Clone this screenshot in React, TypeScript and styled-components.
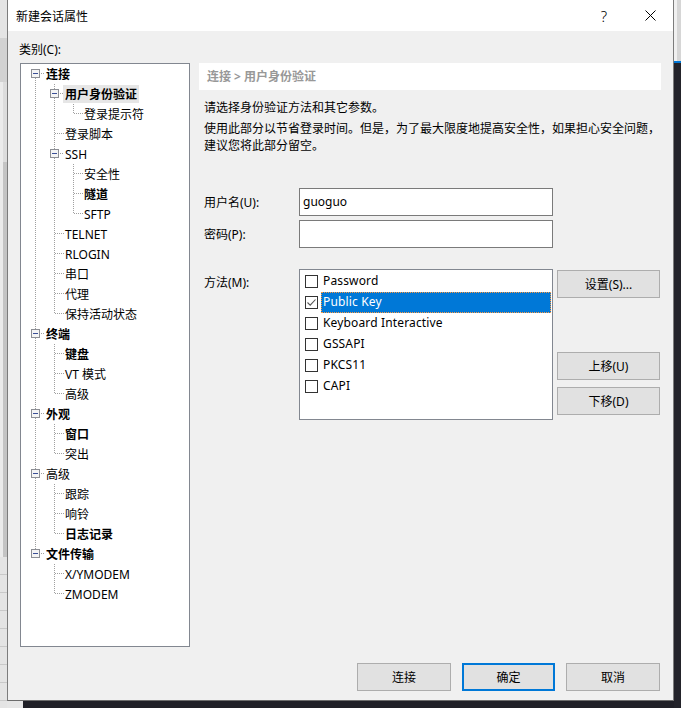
import { createGlobalStyle, styled } from "styled-components"

const GlobalStyle = createGlobalStyle`
  html, body {
    margin: 0;
    padding: 0;
    background: #202027;
  }
  body {
    font-family: "Noto Sans", "Noto Sans CJK SC", sans-serif;
    font-size: 12px;
    color: #000;
  }
  * { box-sizing: border-box; }
`

const Page = styled.div`
  display: flex;
  width: 681px;
  height: 708px;
  overflow: hidden;
  background: #202027;
`

const LeftStrip = styled.div`
  width: 7px;
  display: flex;
  flex-direction: column;
  background: #eaeaea;
`

const StripPart = styled.div<{ $h: number; $bg: string }>`
  height: ${p => p.$h}px;
  background: ${p => p.$bg};
  flex-shrink: 0;
`

const RightStrip = styled.div`
  flex: 1;
  display: flex;
  flex-direction: column;
  background: #23232a;
`

const DialogColumn = styled.div`
  width: 667px;
  display: flex;
  flex-direction: column;
`

const BottomStrip = styled.div`
  flex: 1;
  display: flex;
  background: #202027;
`

const Dialog = styled.div`
  height: 701px;
  display: flex;
  flex-direction: column;
  border-left: 1px solid #7c7c7c;
  border-right: 1px solid #7c7c7c;
  border-bottom: 1px solid #6c6c6c;
`

const TitleBar = styled.div`
  height: 31px;
  background: #fff;
  display: flex;
  align-items: center;
  padding-left: 8px;
`

const Title = styled.span`
  flex: 1;
  font-size: 12px;
  font-family: "Noto Sans CJK SC", sans-serif;
`

const TitleButton = styled.div`
  width: 46px;
  height: 31px;
  display: flex;
  align-items: center;
  justify-content: center;
  font-size: 15px;
  font-weight: 300;
  font-family: "Noto Sans", sans-serif;
`

const Body = styled.div`
  flex: 1;
  background: #f0f0f0;
  display: flex;
  flex-direction: column;
  padding: 0 12px;
`

const CategoryLabel = styled.div`
  margin: 10px 0 0 -1px;
  height: 17px;
  line-height: 17px;
`

const MainRow = styled.div`
  margin-top: 5px;
  height: 584px;
  display: flex;
  gap: 9px;
`

const Tree = styled.div`
  width: 170px;
  height: 584px;
  background: #fff;
  border: 1px solid #828790;
  padding-left: 5px;
  display: flex;
  flex-direction: column;
`

const TreeRow = styled.div`
  height: 20px;
  display: flex;
  align-items: center;
`

const TreeLabel = styled.span<{ $bold?: boolean; $sel?: boolean }>`
  height: 18px;
  line-height: 18px;
  padding: 1px 2px 0;
  margin-left: -1px;
  white-space: nowrap;
  font-weight: ${p => (p.$bold ? 700 : 400)};
  background: ${p => (p.$sel ? "#e6e6e6" : "transparent")};
`

const RightPanel = styled.div`
  width: 462px;
  display: flex;
  flex-direction: column;
`

const Breadcrumb = styled.div`
  height: 27px;
  line-height: 27px;
  background: #fff;
  padding-left: 8px;
  color: #989898;
  font-weight: 700;
`

const Para = styled.div<{ $mt: number }>`
  margin-top: ${p => p.$mt}px;
  padding-left: 5px;
  line-height: 17px;
  white-space: nowrap;
`

const FormRow = styled.div<{ $mt: number }>`
  margin-top: ${p => p.$mt}px;
  display: flex;
  align-items: center;
`

const MethodRow = styled.div`
  margin-top: 21px;
  display: flex;
  align-items: flex-start;
`

const FieldLabel = styled.div<{ $top?: boolean }>`
  width: 100px;
  padding-left: 5px;
  line-height: 17px;
  padding-top: ${p => (p.$top ? 5 : 0)}px;
`

const TextInput = styled.div`
  width: 254px;
  height: 28px;
  background: #fff;
  border: 1px solid #7a7a7a;
  padding-left: 3px;
  line-height: 25px;
`

const ListBox = styled.div`
  width: 254px;
  height: 151px;
  background: #fff;
  border: 1px solid #828790;
  padding-top: 1px;
`

const ListItem = styled.div`
  height: 21px;
  display: flex;
  align-items: center;
  padding-left: 5px;
  padding-right: 1px;
`

const CheckBox = styled.span`
  width: 13px;
  height: 13px;
  border: 1px solid #333;
  background: #fff;
  display: inline-flex;
  align-items: center;
  justify-content: center;
  margin-right: 3px;
  flex-shrink: 0;
`

const ItemText = styled.span<{ $sel?: boolean }>`
  height: 21px;
  line-height: 20px;
  padding: 0 2px;
  white-space: nowrap;
  letter-spacing: 0.15px;
  ${p =>
    p.$sel &&
    `
    flex: 1;
    background: #0078d7;
    color: #fff;
    outline: 1px dotted #ff9a40;
    outline-offset: -1px;
  `}
`

const SideButtons = styled.div`
  margin-left: 4px;
  display: flex;
  flex-direction: column;
`

const Button = styled.button<{ $mt?: number; $w?: number; $default?: boolean }>`
  width: ${p => p.$w ?? 103}px;
  height: 28px;
  margin-top: ${p => p.$mt ?? 0}px;
  background: #e1e1e1;
  border: ${p => (p.$default ? "2px solid #0078d7" : "1px solid #adadad")};
  font: inherit;
  color: #000;
  padding: 0;
`

const Footer = styled.div`
  margin-top: 16px;
  margin-right: 1px;
  display: flex;
  justify-content: flex-end;
  gap: 11px;
`

type Node = { l: number; t: string; b?: boolean; box?: boolean; sel?: boolean }

const nodes: Node[] = [
  { l: 0, t: "连接", b: true, box: true },
  { l: 1, t: "用户身份验证", b: true, box: true, sel: true },
  { l: 2, t: "登录提示符" },
  { l: 1, t: "登录脚本" },
  { l: 1, t: "SSH", box: true },
  { l: 2, t: "安全性" },
  { l: 2, t: "隧道", b: true },
  { l: 2, t: "SFTP" },
  { l: 1, t: "TELNET" },
  { l: 1, t: "RLOGIN" },
  { l: 1, t: "串口" },
  { l: 1, t: "代理" },
  { l: 1, t: "保持活动状态" },
  { l: 0, t: "终端", b: true, box: true },
  { l: 1, t: "键盘", b: true },
  { l: 1, t: "VT 模式" },
  { l: 1, t: "高级" },
  { l: 0, t: "外观", b: true, box: true },
  { l: 1, t: "窗口", b: true },
  { l: 1, t: "突出" },
  { l: 0, t: "高级", box: true },
  { l: 1, t: "跟踪" },
  { l: 1, t: "响铃" },
  { l: 1, t: "日志记录", b: true },
  { l: 0, t: "文件传输", b: true, box: true },
  { l: 1, t: "X/YMODEM" },
  { l: 1, t: "ZMODEM" },
]

// does nodes[i] have a later sibling at the same level
const hasNext = (i: number) => {
  for (let j = i + 1; j < nodes.length; j++) {
    if (nodes[j].l < nodes[i].l) return false
    if (nodes[j].l === nodes[i].l) return true
  }
  return false
}

const LINE = "#a0a0a0"

function Connector({ top, bottom, horiz, box, pass }: { top?: boolean; bottom?: boolean; horiz?: boolean; box?: boolean; pass?: boolean }) {
  return (
    <svg width="19" height="20" style={{ flexShrink: 0 }}>
      {pass && <line x1="9.5" y1="0" x2="9.5" y2="20" stroke={LINE} strokeDasharray="1 1" />}
      {top && <line x1="9.5" y1="0" x2="9.5" y2={box ? 5 : 10} stroke={LINE} strokeDasharray="1 1" />}
      {bottom && <line x1="9.5" y1={box ? 14 : 10} x2="9.5" y2="20" stroke={LINE} strokeDasharray="1 1" />}
      {horiz && <line x1={box ? 15 : 10} y1="9.5" x2="19" y2="9.5" stroke={LINE} strokeDasharray="1 1" />}
      {box && (
        <>
          <rect x="5.5" y="5.5" width="8" height="8" fill="#f4f4f4" stroke="#8c8e94" />
          <line x1="7" y1="9.5" x2="12" y2="9.5" stroke="#3a4f96" />
        </>
      )}
    </svg>
  )
}

function TreeView() {
  const open: boolean[] = []
  return (
    <Tree>
      {nodes.map((n, i) => {
        const next = hasNext(i)
        const cols = []
        for (let k = 0; k < n.l; k++) cols.push(<Connector key={k} pass={open[k]} />)
        const first = i === 0
        cols.push(
          <Connector key="own" top={!first} bottom={next} horiz box={n.box} />
        )
        open[n.l] = next
        return (
          <TreeRow key={i}>
            {cols}
            <TreeLabel $bold={n.b} $sel={n.sel}>{n.t}</TreeLabel>
          </TreeRow>
        )
      })}
    </Tree>
  )
}

const methods = ["Password", "Public Key", "Keyboard Interactive", "GSSAPI", "PKCS11", "CAPI"]

export default function App() {
  return (
    <>
      <GlobalStyle />
      <Page>
        <LeftStrip>
          <StripPart $h={38} $bg="#e4e4e4" />
          <StripPart $h={44} $bg="#d2d2d2" />
          <StripPart $h={80} $bg="linear-gradient(to right, #ebebeb 0 3px, #dcdcdc 3px)" />
          <StripPart $h={395} $bg="linear-gradient(to right, #ebebeb 0 3px, #c4c4c4 3px)" />
          <StripPart $h={151} $bg="repeating-linear-gradient(to bottom, #e4e4e4 0 17px, #c9c9c9 17px 18px)" />
        </LeftStrip>
        <DialogColumn>
          <Dialog>
            <TitleBar>
              <Title>新建会话属性</Title>
              <TitleButton>?</TitleButton>
              <TitleButton>
                <svg width="11" height="11" viewBox="0 0 11 11">
                  <path d="M0.5 0.5 L10.5 10.5 M10.5 0.5 L0.5 10.5" stroke="#000" strokeWidth="1" />
                </svg>
              </TitleButton>
            </TitleBar>
            <Body>
              <CategoryLabel>类别(C):</CategoryLabel>
              <MainRow>
                <TreeView />
                <RightPanel>
                  <Breadcrumb>连接 &gt; 用户身份验证</Breadcrumb>
                  <Para $mt={9}>请选择身份验证方法和其它参数。</Para>
                  <Para $mt={4}>
                    使用此部分以节省登录时间。但是，为了最大限度地提高安全性，如果担心安全问题，
                    <br />
                    建议您将此部分留空。
                  </Para>
                  <FormRow $mt={34}>
                    <FieldLabel>用户名(U):</FieldLabel>
                    <TextInput>guoguo</TextInput>
                  </FormRow>
                  <FormRow $mt={4}>
                    <FieldLabel>密码(P):</FieldLabel>
                    <TextInput />
                  </FormRow>
                  <MethodRow>
                    <FieldLabel $top>方法(M):</FieldLabel>
                    <ListBox>
                      {methods.map((m, i) => (
                        <ListItem key={m}>
                          <CheckBox>
                            {i === 1 && (
                              <svg width="11" height="11" viewBox="0 0 11 11">
                                <path d="M1.5 5.5 L4.2 8.2 L9.5 2.5" stroke="#555" strokeWidth="1.1" fill="none" />
                              </svg>
                            )}
                          </CheckBox>
                          <ItemText $sel={i === 1}>{m}</ItemText>
                        </ListItem>
                      ))}
                    </ListBox>
                    <SideButtons>
                      <Button $mt={1}>设置(S)...</Button>
                      <Button $mt={54}>上移(U)</Button>
                      <Button $mt={7}>下移(D)</Button>
                    </SideButtons>
                  </MethodRow>
                </RightPanel>
              </MainRow>
              <Footer>
                <Button $w={94}>连接</Button>
                <Button $w={93} $default>确定</Button>
                <Button $w={94}>取消</Button>
              </Footer>
            </Body>
          </Dialog>
          <BottomStrip>
            <StripPart $h={7} $bg="#e6e6e6" style={{ width: 16 }} />
          </BottomStrip>
        </DialogColumn>
        <RightStrip>
          <StripPart $h={61} $bg="linear-gradient(to right, #f0f0f0 0 3px, #d6d6d6 3px)" />
          <StripPart $h={2} $bg="#0078d7" />
        </RightStrip>
      </Page>
    </>
  )
}
